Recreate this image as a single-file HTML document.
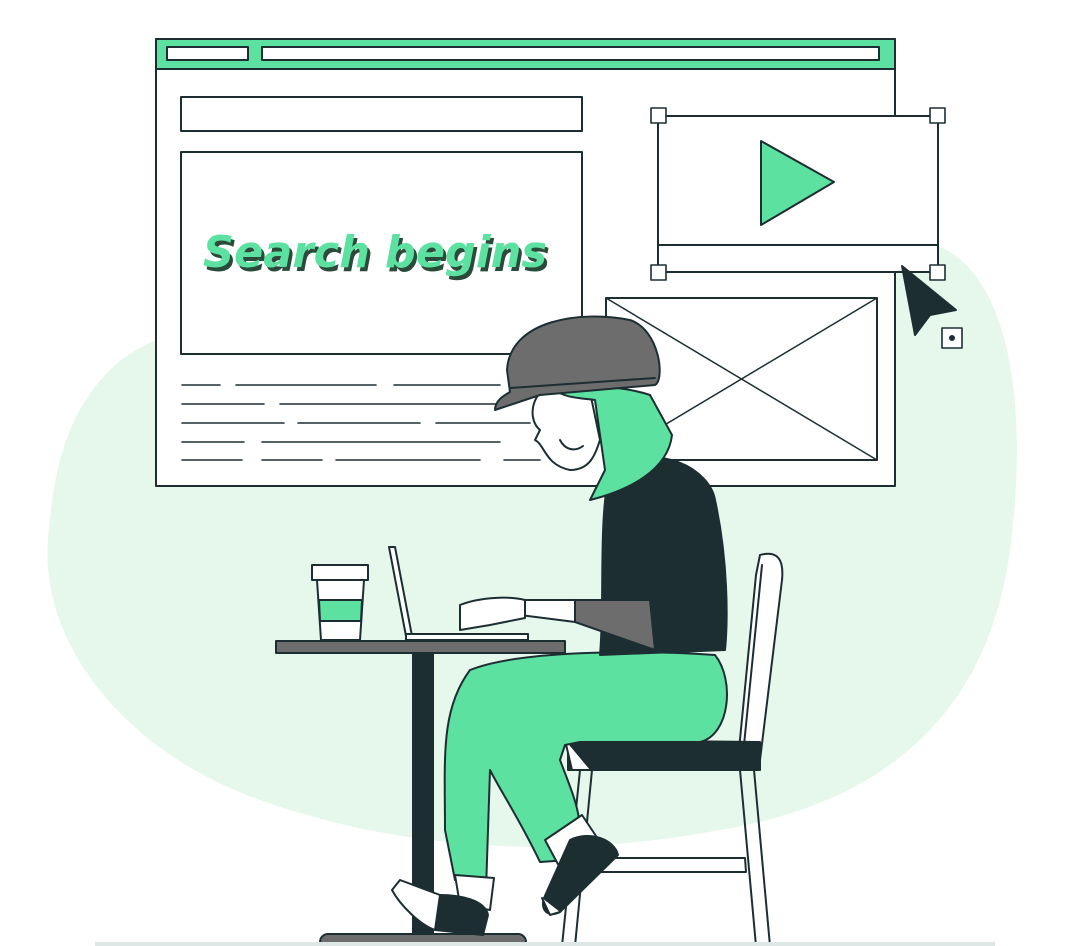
<!DOCTYPE html>
<html><head><meta charset="utf-8"><style>
html,body{margin:0;padding:0;background:#fff;width:1066px;height:946px;overflow:hidden}
svg{display:block}
</style></head><body>
<svg width="1066" height="946" viewBox="0 0 1066 946" xmlns="http://www.w3.org/2000/svg">
<g stroke="#1d2e33" stroke-width="2" stroke-linejoin="round" stroke-linecap="round">
<path d="M110 370 C180 300 330 320 480 330 C620 340 800 250 900 240 C1010 235 1030 400 1010 550 C990 700 900 800 720 830 C560 860 400 850 260 800 C120 750 40 640 48 540 C54 460 70 410 110 370 Z" fill="#e6f7ec" stroke="none"/>
<rect x="156" y="39" width="739" height="447" fill="#fff"/>
<rect x="156" y="39" width="739" height="30" fill="#5ce1a0"/>
<rect x="167" y="47" width="81" height="13" fill="#fff"/>
<rect x="262" y="47" width="617" height="13" fill="#fff"/>
<rect x="181" y="97" width="401" height="34" fill="#fff"/>
<rect x="181" y="152" width="401" height="202" fill="#fff"/>
<g stroke-width="1.6">
<path d="M182 385H220M236 385H376M394 385H500"/>
<path d="M182 404H264M280 404H500"/>
<path d="M182 423H284M298 423H420M436 423H530"/>
<path d="M182 442H244M262 442H500"/>
<path d="M182 460H242M262 460H322M336 460H480M504 460H540"/>
</g>
<rect x="606" y="298" width="271" height="162" fill="#fff"/>
<path d="M606 298L877 460M877 298L606 460" stroke-width="1.5"/>
<rect x="658" y="116" width="280" height="156" fill="#fff"/>
<path d="M658 245H938"/>
<path d="M761 141L834 182L761 225Z" fill="#5ce1a0"/>
<g fill="#fff" stroke-width="1.6">
<rect x="651" y="108" width="15" height="15"/><rect x="930" y="108" width="15" height="15"/>
<rect x="651" y="265" width="15" height="15"/><rect x="930" y="265" width="15" height="15"/>
<rect x="942" y="328" width="20" height="20"/>
</g>
<circle cx="952" cy="338" r="2" fill="#1d2e33"/>
<path d="M902 266L956 310L930 315L915 335Z" fill="#1d2e33"/>
</g>
<text x="206" y="271" textLength="344" lengthAdjust="spacingAndGlyphs" font-family="DejaVu Sans, sans-serif" font-weight="bold" font-style="italic" font-size="44" fill="#2a4a3a">Search begins</text>
<text x="203" y="267" textLength="344" lengthAdjust="spacingAndGlyphs" font-family="DejaVu Sans, sans-serif" font-weight="bold" font-style="italic" font-size="44" fill="#5ce1a0">Search begins</text>
<g stroke="#1d2e33" stroke-width="2" stroke-linejoin="round" stroke-linecap="round">
<path d="M760 555 C778 550 784 560 782 580 L760 760 L738 760 L756 575 Z" fill="#fff"/>
<path d="M762 565 L742 765" fill="none"/>
<path d="M568 740 L760 742 L760 770 L568 770 Z" fill="#1d2e33"/>
<path d="M565 740 L572 770 L590 770" fill="#fff"/>
<path d="M740 770 L756 946 M754 770 L770 946" fill="none"/>
<path d="M580 770 L562 946 M592 770 L575 946" fill="none"/>
<path d="M590 858 L745 858 L746 872 L588 872Z" fill="#fff"/>
<rect x="276" y="641" width="289" height="12" fill="#6d6d6d"/>
<rect x="413" y="653" width="20" height="293" fill="#1d2e33"/>
<rect x="320" y="934" width="206" height="20" rx="8" fill="#6d6d6d"/>
<path d="M317 580 L364 580 L360 640 L321 640Z" fill="#fff"/>
<path d="M319 600 L362 600 L361 621 L320 621Z" fill="#5ce1a0"/>
<rect x="312" y="565" width="56" height="15" fill="#fff"/>
<path d="M389 547 L395 547 L412 636 L406 636Z" fill="#fff"/>
<rect x="406" y="634" width="122" height="6" fill="#fff"/>
<path d="M470 670 C520 650 640 650 715 655 C735 680 730 735 700 742 L580 742 L565 745 L560 760 C575 800 590 830 570 860 L540 862 C520 820 500 790 490 770 L486 890 L455 880 L445 830 C445 760 440 710 470 670Z" fill="#5ce1a0"/>
<path d="M545 840 L582 815 L602 845 L560 868Z" fill="#fff"/>
<path d="M570 840 C590 830 615 840 618 855 L560 912 C548 918 540 910 544 898Z" fill="#1d2e33"/>
<path d="M542 898 L550 915 L560 912" fill="#fff"/>
<path d="M455 875 L494 878 L490 910 L460 905Z" fill="#fff"/>
<path d="M440 895 C460 895 485 900 488 915 L483 935 L435 930Z" fill="#1d2e33"/>
<path d="M400 880 L440 895 L435 930 C420 925 400 905 392 890 Z" fill="#fff"/>
<path d="M610 470 C660 440 710 470 715 500 C728 560 728 620 725 650 L600 655 C605 600 598 520 610 470Z" fill="#1d2e33"/>
<path d="M572 600 L650 600 L655 650 L575 622Z" fill="#6d6d6d"/>
<path d="M520 600 L575 600 L575 622 L520 615Z" fill="#fff"/>
<path d="M460 605 C480 597 510 596 525 600 L525 618 L490 625 L460 630Z" fill="#fff"/>
<path d="M550 385 C530 395 528 420 540 430 L535 440 C545 445 545 465 570 470 C590 470 595 455 600 440 L590 392 Z" fill="#fff"/>
<path d="M555 390 C580 385 620 385 650 395 L672 435 C668 470 630 490 590 500 L605 470 L595 400 C580 398 565 398 555 390Z" fill="#5ce1a0"/>
<path d="M507 370 C510 320 580 310 630 320 C660 330 665 380 655 385 L540 395 L495 410 C495 400 505 395 510 392Z" fill="#6d6d6d"/>
<path d="M510 388 L655 378" fill="none"/>
<path d="M560 440 C565 450 575 452 583 446" fill="none"/>
</g>
<rect x="95" y="942" width="900" height="4" fill="#dfe6e6"/>
</svg>
</body></html>
